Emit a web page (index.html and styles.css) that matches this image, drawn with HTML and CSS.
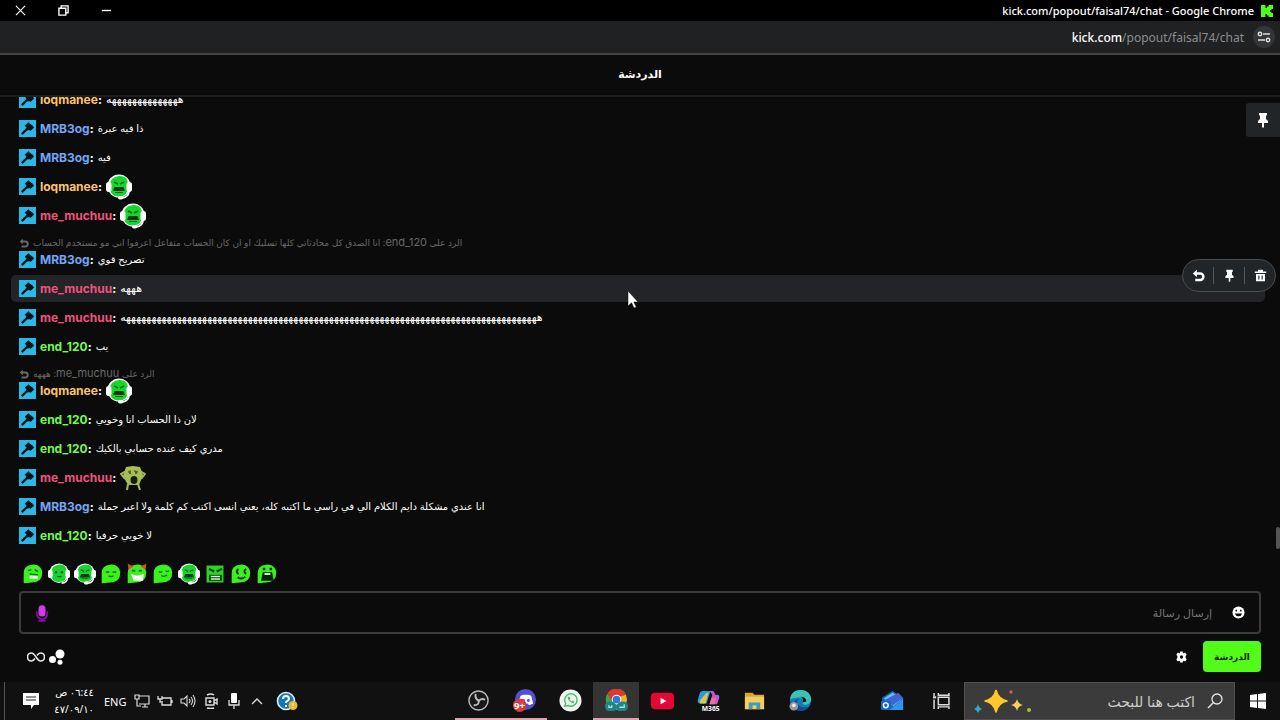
FILE: index.html
```
<!DOCTYPE html>
<html lang="ar" dir="ltr">
<head>
  <meta charset="UTF-8">
  <title>kick.com/popout/faisal74/chat</title>
  <meta name="viewport" content="width=device-width, initial-scale=1.0">
  <link rel="stylesheet" href="styles.css">
</head>
<body>
  <svg class="sprite" aria-hidden="true">
    <symbol id="mod" viewBox="0 0 18 18"><rect width="18" height="18" fill="#2bb8e6"/><path d="M3 15l6.500-6.500" stroke="#071318" stroke-width="2.400"/><path d="M6 6l4-3.500 1.500 1.500 2.500 1.500 2 2.500-3.500 3.500-2-1-1 1-2-2 .500-1.500z" fill="#071318"/></symbol>
    <symbol id="reply" viewBox="0 0 16 16"><path d="M6 1v3h4a5 5 0 010 11H4v-3h6a2 2 0 000-5H6v3L1 5.500z" fill="currentColor"/></symbol>
    <symbol id="pin" viewBox="0 0 16 16"><path d="M4 1h8v2l-1 1v3l2 2v2H9v4l-1 1-1-1v-4H3V9l2-2V4L4 3z" fill="currentColor"/></symbol>
    <symbol id="trash" viewBox="0 0 16 16"><path d="M5 1h6v2h4v2H1V3h4zM2.500 6h11v9h-11z" fill="currentColor"/><path d="M6 8v5M10 8v5" stroke="#222528" stroke-width="1.400"/></symbol>
    <symbol id="headset" viewBox="0 0 26 26"><circle cx="13" cy="12" r="11.500" fill="#fff"/><path d="M4 12Q3.500 3 13 2T22 12Q22.500 22 13 22.500T4 12" fill="#16d52c"/><rect y="8" width="5.500" height="10" rx="2.700" fill="#fff"/><rect x="20.500" y="8" width="5.500" height="10" rx="2.700" fill="#fff"/><path d="M23 17q0 6-7 7" fill="none" stroke="#fff" stroke-width="1.800"/><rect x="12" y="22" width="5" height="3.500" rx="1.700" fill="#fff"/><path d="M8 8l4 2M18 8l-4 2" stroke="#07661a" stroke-width="1.600"/><path d="M7 17l1.500-4h9l1.500 4z" fill="#063b16"/><path d="M9 18.500h8" stroke="#07661a"/></symbol>
    <symbol id="calm" viewBox="0 0 26 26"><circle cx="13" cy="12" r="11.500" fill="#fff"/><path d="M4 12Q3.500 3 13 2T22 12Q22.500 22 13 22.500T4 12" fill="#16d52c"/><rect y="8" width="5.500" height="10" rx="2.700" fill="#fff"/><rect x="20.500" y="8" width="5.500" height="10" rx="2.700" fill="#fff"/><path d="M23 17q0 6-7 7" fill="none" stroke="#fff" stroke-width="1.800"/><circle cx="9.500" cy="11" r="1.400" fill="#075a17"/><circle cx="16.500" cy="11" r="1.400" fill="#075a17"/><path d="M11 16h5" stroke="#075a17" stroke-width="1.500"/></symbol>
    <symbol id="blob" viewBox="0 0 26 26"><path d="M2 24V12Q2 3 12 2t12 9q0 12-12 12z" fill="#3cf01e"/></symbol>
    <symbol id="scream" viewBox="0 0 26 26"><path d="M8 19l-1 6M18 19l2 6M5 14L1 9l5-3M21 14l4-5-5-3" fill="none" stroke="#a6b75c" stroke-width="2"/><path d="M6 2l7-1 7 1 3 8-4 10H8L3 11z" fill="#a9bd56"/><path d="M8 7l3-1M14 6l4 1" stroke="#596628" stroke-width="1.500"/><circle cx="10" cy="8" r="1" fill="#40491f"/><circle cx="16" cy="8" r="1" fill="#40491f"/><ellipse cx="14" cy="15" rx="3.500" ry="4" fill="#171d0c"/></symbol>
  </svg>

  <div class="window">
    <header class="titlebar">
      <div class="controls">
        <button aria-label="Close"><svg viewBox="0 0 12 12"><path d="M1 1l10 10M11 1L1 11" fill="none" stroke="#fff" stroke-width="1.200"/></svg></button>
        <button aria-label="Restore"><svg viewBox="0 0 12 12"><path d="M1 3.500h7.500V11H1zM3.500 3V1H11v7.500H9" fill="none" stroke="#fff" stroke-width="1.500"/></svg></button>
        <button aria-label="Minimize"><svg viewBox="0 0 12 12"><path d="M1 6h10" stroke="#fff" stroke-width="1.500"/></svg></button>
      </div>
      <span class="title">kick.com/popout/faisal74/chat - Google Chrome</span>
      <svg class="kick" viewBox="0 0 12 12"><path d="M0 0h4.500v3H6V1.500h1.500V0H12v4h-1.500v1.200H9v1.600h1.500V8H12v4H7.500v-1.500H6V9H4.500v3H0z" fill="#4dff13"/></svg>
    </header>
    <div class="urlbar">
      <span class="url"><b>kick.com</b>/popout/faisal74/chat</span>
      <button class="site-info" aria-label="Site information"><svg viewBox="0 0 14 14"><path d="M6 4h7M1 10h7" stroke="#ddd" stroke-width="1.500"/><circle cx="3" cy="4" r="1.700" fill="none" stroke="#ddd" stroke-width="1.400"/><circle cx="11" cy="10" r="1.700" fill="none" stroke="#ddd" stroke-width="1.400"/></svg></button>
    </div>
    <h1 class="chat-title">الدردشة</h1>

    <main class="chat">
      <div class="messages">
        <div class="message"><div class="line"><svg class="badge"><use href="#mod"/></svg><b class="orange">loqmanee</b><b>:</b><span class="text laugh">ههههههههههههههه</span></div></div>
        <div class="message"><div class="line"><svg class="badge"><use href="#mod"/></svg><b class="blue">MRB3og</b><b>:</b><span class="text">ذا فيه عبرة</span></div></div>
        <div class="message"><div class="line"><svg class="badge"><use href="#mod"/></svg><b class="blue">MRB3og</b><b>:</b><span class="text">فيه</span></div></div>
        <div class="message"><div class="line"><svg class="badge"><use href="#mod"/></svg><b class="orange">loqmanee</b><b>:</b><svg class="emote"><use href="#headset"/></svg></div></div>
        <div class="message"><div class="line"><svg class="badge"><use href="#mod"/></svg><b class="pink">me_muchuu</b><b>:</b><svg class="emote"><use href="#headset"/></svg></div></div>
        <div class="message">
          <div class="reply"><svg><use href="#reply"/></svg><span dir="rtl">الرد على <i>end_120</i>: انا الصدق كل محادثاتي كلها تسليك او ان كان الحساب متفاعل اعرفوا اني مو مستخدم الحساب</span></div>
          <div class="line"><svg class="badge"><use href="#mod"/></svg><b class="blue">MRB3og</b><b>:</b><span class="text">تصريح قوي</span></div>
        </div>
        <div class="message active">
          <div class="line"><svg class="badge"><use href="#mod"/></svg><b class="pink">me_muchuu</b><b>:</b><span class="text laugh">هههه</span></div>
          <div class="actions">
            <button aria-label="رد"><svg><use href="#reply"/></svg></button>
            <button aria-label="تثبيت"><svg><use href="#pin"/></svg></button>
            <button aria-label="حذف"><svg><use href="#trash"/></svg></button>
          </div>
        </div>
        <div class="message"><div class="line"><svg class="badge"><use href="#mod"/></svg><b class="pink">me_muchuu</b><b>:</b><span class="text laugh">ههههههههههههههههههههههههههههههههههههههههههههههههههههههههههههههههههههههههههههههههههه</span></div></div>
        <div class="message"><div class="line"><svg class="badge"><use href="#mod"/></svg><b class="green">end_120</b><b>:</b><span class="text">يب</span></div></div>
        <div class="message">
          <div class="reply"><svg><use href="#reply"/></svg><span dir="rtl">الرد على <i>me_muchuu</i>: هههه</span></div>
          <div class="line"><svg class="badge"><use href="#mod"/></svg><b class="orange">loqmanee</b><b>:</b><svg class="emote"><use href="#headset"/></svg></div>
        </div>
        <div class="message"><div class="line"><svg class="badge"><use href="#mod"/></svg><b class="green">end_120</b><b>:</b><span class="text">لان ذا الحساب انا وخويي</span></div></div>
        <div class="message"><div class="line"><svg class="badge"><use href="#mod"/></svg><b class="green">end_120</b><b>:</b><span class="text">مدري كيف عنده حسابي بالكيك</span></div></div>
        <div class="message"><div class="line"><svg class="badge"><use href="#mod"/></svg><b class="pink">me_muchuu</b><b>:</b><svg class="emote"><use href="#scream"/></svg></div></div>
        <div class="message"><div class="line"><svg class="badge"><use href="#mod"/></svg><b class="blue">MRB3og</b><b>:</b><span class="text">انا عندي مشكلة دايم الكلام الي في راسي ما اكتبه كله، يعني انسى اكتب كم كلمة ولا اعبر جملة</span></div></div>
        <div class="message"><div class="line"><svg class="badge"><use href="#mod"/></svg><b class="green">end_120</b><b>:</b><span class="text">لا خويي حرفيا</span></div></div>
      </div>
      <button class="pinned" aria-label="الرسالة المثبتة"><svg><use href="#pin"/></svg></button>
      <div class="scroll-thumb"></div>
      <svg class="cursor" viewBox="0 0 12 19"><path d="M1 1v15l3.500-3.300L7 18l2.300-1-2.500-5H11z" fill="#fff" stroke="#111" stroke-width=".5"/></svg>
    </main>

    <section class="composer">
      <div class="emotes">
        <button aria-label="Emote 1"><svg viewBox="0 0 26 26"><use href="#blob"/><path d="M7 9l4-1M15 8l4 2" stroke="#08741a" stroke-width="1.800"/><path d="M9 15h10v4H9z" fill="#d9f7c9"/><path d="M9 13l10 1" stroke="#08741a" stroke-width="1.500"/></svg></button>
        <button aria-label="Emote 2"><svg><use href="#calm"/></svg></button>
        <button aria-label="Emote 3"><svg><use href="#headset"/></svg></button>
        <button aria-label="Emote 4"><svg viewBox="0 0 26 26"><use href="#blob"/><path d="M7 10q2 2 4 0M15 10q2 2 4 0M10 15q3 2 6 0" fill="none" stroke="#08741a" stroke-width="1.600"/></svg></button>
        <button aria-label="Emote 5"><svg viewBox="0 0 26 26"><use href="#blob"/><path d="M2 1l7 3-6 4zM24 1l-7 3 6 4z" fill="#e84b1e"/><path d="M7 9h4M15 9h4" stroke="#08741a" stroke-width="2"/><path d="M6 13l7 2 8-2-1 8H9z" fill="#fff"/></svg></button>
        <button aria-label="Emote 6"><svg viewBox="0 0 26 26"><use href="#blob"/><path d="M8 10q2 2 4 0M16 9q2 2 4 0M11 15q4 2 7-1" fill="none" stroke="#08741a" stroke-width="1.600"/></svg></button>
        <button aria-label="Emote 7"><svg><use href="#headset"/></svg></button>
        <button aria-label="Emote 8"><svg viewBox="0 0 26 26"><path d="M3 3h20v20H3z" fill="#28d81f"/><path d="M6 7l6 3M21 7l-6 3" stroke="#06320f" stroke-width="2.500"/><path d="M6 14h15v7H6z" fill="#06320f"/><path d="M8 16h11M8 19h11" stroke="#d8f8cd" stroke-width="1.800"/></svg></button>
        <button aria-label="Emote 9"><svg viewBox="0 0 26 26"><use href="#blob"/><path d="M10 7q-4 3 0 6M19 7q-4 3 0 6M9 17q5 3 9-1" fill="none" stroke="#06320f" stroke-width="2.200"/></svg></button>
        <button aria-label="Emote 10"><svg viewBox="0 0 26 26"><use href="#blob"/><path d="M8 7h3M16 7h3" stroke="#06320f" stroke-width="3"/><path d="M6 21l2-10h11l2 10z" fill="#06230b"/><path d="M10 13h7" stroke="#fff" stroke-width="2"/></svg></button>
      </div>
      <div class="field">
        <button aria-label="تسجيل صوتي"><svg class="mic" viewBox="0 0 16 20"><path d="M2 8v3a6 6 0 0012 0V8M8 17v2M4 19h8" fill="none" stroke="#8b0cae" stroke-width="2"/><rect x="4" y="1" width="8" height="13" rx="4" fill="#d33be8"/></svg></button>
        <input type="text" dir="rtl" placeholder="إرسال رسالة" aria-label="إرسال رسالة">
        <button aria-label="رموز تعبيرية"><svg class="smile" viewBox="0 0 14 14"><circle cx="7" cy="7" r="6.500" fill="#fff"/><path d="M4.500 4v2M9.500 4v2" stroke="#0b0b0b" stroke-width="1.600"/><path d="M3 8h8q-1 3-4 3T3 8" fill="#0b0b0b"/></svg></button>
      </div>
      <div class="footer">
        <button aria-label="∞"><svg class="infinity" viewBox="0 0 18 10"><path d="M8 6.500C7 8 6 9 4.500 9a4 4 0 010-8C6 1 7 2 9 5s3 4 4.500 4a4 4 0 000-8C12 1 11 2 10 3.500" fill="none" stroke="#e8e8e8" stroke-width="1.600"/></svg></button>
        <button aria-label="نقاط"><svg class="dots" viewBox="0 0 16 16"><circle cx="11" cy="5" r="4.500" fill="#fff"/><circle cx="3.500" cy="10.500" r="3.500" fill="#fff"/><circle cx="11" cy="13.300" r="2.500" fill="#fff"/></svg></button>
        <button class="settings" aria-label="الإعدادات"><svg viewBox="0 0 12 12"><path d="M4.500 0h3v1.500l1 .500L10 1l1.700 2.500L10.500 5v2l1.200 1.500L10 11l-1.500-1-1 .500V12h-3v-1.500l-1-.500L2 11 .300 8.500 1.500 7V5L.300 3.500 2 1l1.500 1 1-.500z" fill="#fff"/><circle cx="6" cy="6" r="1.800" fill="#0b0b0b"/></svg></button>
        <button class="send">الدردشة</button>
      </div>
    </section>
  </div>

  <footer class="taskbar">
    <div class="tray">
      <svg class="note" viewBox="0 0 16 16"><path d="M0 0h16v12h-5l-3 4v-4H0z" fill="#fff"/><path d="M3 4h10M3 7h10" stroke="#222"/></svg>
      <time class="clock" dir="rtl">٠٦:٤٤ ص<br>٤٧/٠٩/١٠</time>
      <span class="lang">ENG</span>
      <svg viewBox="0 0 16 16"><path d="M5 3h10v8H5M8 14h6M11 11v3M1 2h4v4H1zM3 6v7h4" fill="none" stroke="#ddd" stroke-width="1.200"/></svg>
      <svg viewBox="0 0 16 16"><path d="M5 5h9v7H5v-2M15 7v3M1 3v3h4V3M3 6v3h3" fill="none" stroke="#ddd" stroke-width="1.300"/></svg>
      <svg viewBox="0 0 16 16"><path d="M1 6h3l3-3v10l-3-3H1zM9 6q2 2 0 4M11 4q3 4 0 8M13 2q4 6 0 12" fill="none" stroke="#ddd" stroke-width="1.100"/></svg>
      <svg viewBox="0 0 16 16"><path d="M3 5h8v7H3zM11 8l3-2v5l-3-2M4 2q4-2 7 0M4 15q4 1 7 0" fill="none" stroke="#ddd" stroke-width="1.400"/><circle cx="7" cy="8.500" r="1.500" fill="#ddd"/></svg>
      <svg viewBox="0 0 16 16"><rect x="5" width="6" height="10" rx="1" fill="#fff"/><path d="M3 7v5h10V7M8 12v4" fill="none" stroke="#ddd" stroke-width="1.300"/></svg>
      <svg viewBox="0 0 16 16"><path d="M3 11l5-5 5 5" fill="none" stroke="#ddd" stroke-width="1.300"/></svg>
      <svg class="help" viewBox="0 0 22 20"><circle cx="10" cy="10" r="8.500" fill="#1677b7" stroke="#d9edf5" stroke-width="1.600"/><path d="M7 8q0-3 3-3t3 3q0 1-3 3v1M10 14v2" fill="none" stroke="#fff" stroke-width="2"/><circle cx="17" cy="14.500" r="4.500" fill="#eeb82c"/><path d="M17 12v3M17 16v1" stroke="#fff"/></svg>
    </div>
    <nav class="apps" aria-label="Apps">
      <button class="open" aria-label="OBS"><svg viewBox="0 0 24 24"><circle cx="12" cy="12" r="10" fill="#17191b" stroke="#bbb" stroke-width="1.500"/><path d="M9 5q-1 6 4 7M19 11q-6-2-7 3M7 17q6 0 5-5" fill="none" stroke="#bbb" stroke-width="2"/></svg></button>
      <button class="open" aria-label="Discord"><svg viewBox="0 0 24 24"><circle cx="13" cy="11" r="11" fill="#5350cf"/><path d="M8 7l3-1h5l3 1 2 8-4 2-2-2h-4l-2 2-4-2z" fill="#fff"/><circle cx="11" cy="12" r="1.500" fill="#5350cf"/><circle cx="16" cy="12" r="1.500" fill="#5350cf"/><circle cx="7" cy="17" r="7" fill="#d83c42"/><text x="1" y="21" font-size="10" font-weight="700" fill="#fff">9+</text></svg></button>
      <button aria-label="WhatsApp"><svg viewBox="0 0 24 24"><circle cx="12" cy="12" r="11.500" fill="#ecf6ed"/><path d="M6 18l1-3a6.500 6.500 0 112.500 2.200z" fill="none" stroke="#4eb775" stroke-width="1.500"/><path d="M9 8q0 5 6 7l1-2-2-1-1 1-2-2 1-1-1-2z" fill="#4eb775"/></svg></button>
      <button class="open current" aria-label="Chrome"><svg viewBox="0 0 24 24"><circle cx="12" cy="11" r="11" fill="#e5b72b"/><path d="M2 6a11 11 0 0120 0l-10 3-4 5z" fill="#d83b2e"/><path d="M2 6l7 8 2 8A11 11 0 012 6" fill="#36a852"/><circle cx="12" cy="11" r="5" fill="#fff"/><circle cx="12" cy="11" r="4" fill="#3178dc"/><path d="M0 18q0-5 6-5 4 0 6 4 2-4 6-4 6 0 6 5t-5 5h-5l-2-2-2 2H5q-5 0-5-5" fill="#20858b"/><path d="M4 17v2h3v-2M15 19h5v-3" fill="none" stroke="#a7e2dd" stroke-width="1.400"/></svg></button>
      <button aria-label="YouTube"><svg viewBox="0 0 24 24"><rect y="4" width="24" height="17" rx="4" fill="#e40736"/><path d="M10 9l6 3.500-6 3.500z" fill="#fff"/></svg></button>
      <button aria-label="Microsoft 365"><svg viewBox="0 0 24 24"><path d="M6 2h8l-4 13H3q-3 0-2-4l2-7q1-2 3-2" fill="#2799e5"/><path d="M3 12l7-8h2l-3 11H3z" fill="#dec447"/><path d="M13 2h3q2 0 3 4h2q3 0 2 4l-2 6h-8l3-10z" fill="#bd59d6"/><path d="M15 10l5-1-2 7h-5z" fill="#ee7194"/><text x="5" y="23" font-size="7" font-weight="700" fill="#fff">M365</text></svg></button>
      <button aria-label="File Explorer"><svg viewBox="0 0 24 24"><path d="M2 4h8l2 2h10v15H2z" fill="#dca52c"/><path d="M2 8h20v13H2z" fill="#f5ce62"/><path d="M6 21v-7h12v7h-4v-4h-4v4z" fill="#3d9bbc"/></svg></button>
      <button aria-label="Edge"><svg viewBox="0 0 24 24"><circle cx="12" cy="12" r="11" fill="#167abd"/><path d="M1 11C2 3 7 1 12 1c7 0 12 5 11 11-1 5-9 6-9 2 2-4-2-6-6-5q-4 0-7 2" fill="#38c4b4"/><path d="M10 10q-5 6 4 9h6q-2 4-8 4Q4 22 5 15q1-4 5-5" fill="#164b94"/><path d="M14 14q2-4-2-6 6 0 6 5" fill="#101214"/><circle cx="5" cy="18" r="4.500" fill="#999"/><circle cx="5" cy="17" r="2" fill="#e7e7e7"/></svg></button>
    </nav>
    <div class="shortcuts">
      <button aria-label="Outlook"><svg viewBox="0 0 24 24"><path d="M1 9l11-7 11 7v13H3z" fill="#1769ce"/><path d="M3 10l9-6 10 6-9 8z" fill="#62c6f5"/><path d="M3 12l15-8 5 5-12 9z" fill="#4262d6"/><path d="M9 22l14-12v12z" fill="#2c97ec"/><rect y="12" width="10" height="10" rx="2" fill="#1169c2"/><circle cx="5" cy="17" r="2.500" fill="none" stroke="#fff" stroke-width="1.500"/></svg></button>
      <button aria-label="Task view"><svg class="taskview" viewBox="0 0 16 16"><path d="M5 5h10v7H5zM5 1v2h10V1M5 16v-2h10v2M1 1v3M1 7v9" fill="none" stroke="#ddd" stroke-width="1.400"/><path d="M0 5h3" stroke="#ddd" stroke-width="2"/></svg></button>
    </div>
    <label class="search">
      <svg class="sparkles" viewBox="0 0 60 26"><path d="M23 2q2 9 11 11-9 2-11 11-2-9-11-11 9-2 11-11" fill="#ffc72c" stroke="#ffc72c" stroke-width="1.500" stroke-linejoin="round"/><path d="M44 11q1 5 6 6-5 1-6 6-1-5-6-6 5-1 6-6" fill="#f5d256"/><path d="M5 16q1 4 4 5-3 1-4 4-1-3-4-4 3-1 4-5" fill="#35a7cc"/><circle cx="38" cy="4" r="1.700" fill="#d65560"/><circle cx="56" cy="22" r="2" fill="#a9bd43"/></svg>
      <input type="text" dir="rtl" placeholder="اكتب هنا للبحث" aria-label="اكتب هنا للبحث">
      <svg class="lens" viewBox="0 0 16 16"><circle cx="10" cy="6" r="5" fill="none" stroke="#e6e6e6" stroke-width="1.300"/><path d="M6.500 9.500L1 15" stroke="#e6e6e6" stroke-width="1.400"/></svg>
    </label>
    <button class="start" aria-label="Start"><svg viewBox="0 0 16 16"><path d="M0 2l7-1v6.500H0zM8 1l8-1v7.500H8zM0 8.500h7V15l-7-1zM8 8.500h8V16l-8-1z" fill="#fff"/></svg></button>
  </footer>
</body>
</html>
```
FILE: styles.css
```
* { box-sizing: border-box; }
body { margin: 0; height: 100vh; display: flex; flex-direction: column; background: #0b0b0b; color: #fff; font-family: Inter, "DejaVu Sans", sans-serif; overflow: hidden; }
button { display: flex; align-items: center; justify-content: center; padding: 0; border: 0; background: none; color: inherit; font: inherit; cursor: pointer; }
input { min-width: 0; padding: 0; border: 0; outline: 0; background: none; color: #fff; font: inherit; }
.sprite { display: none; }
.window { flex: 1; min-height: 0; display: flex; flex-direction: column; }

.titlebar { display: flex; align-items: center; height: 21px; padding: 0 7px 0 15px; background: #000; }
.controls { display: flex; gap: 32px; margin-right: auto; }
.controls svg { width: 11px; height: 11px; }
.title { font: 500 11px "Noto Sans", sans-serif; }
.kick { width: 12px; height: 12px; margin-left: 7px; }
.urlbar { display: flex; align-items: center; justify-content: flex-end; gap: 9px; height: 34px; padding-right: 5px; border-bottom: 2px solid #444; background: #202123; }
.url { color: #8b8c8e; font: 12px "Noto Sans", sans-serif; }
.url b { color: #fff; font-weight: 500; }
.site-info { width: 22px; height: 22px; border-radius: 50%; background: #343537; }
.site-info svg { width: 14px; height: 14px; }
.chat-title { margin: 0; height: 42px; border-bottom: 2px solid #1d1e1f; text-align: center; font-size: 11px; font-weight: 700; line-height: 38px; }

.chat { position: relative; flex: 1; min-height: 0; display: flex; flex-direction: column; justify-content: flex-end; overflow: hidden; }
.messages { display: flex; flex-direction: column; gap: 2px; padding: 0 15px 1px 11px; }
.message { padding: 4px 8px; border-radius: 5px; }
.active { position: relative; background: #222427; }
.line { display: flex; align-items: center; height: 19px; font-size: 12px; line-height: 19px; }
.badge { width: 17px; height: 17px; margin-right: 4px; }
.text { margin-left: 4px; font-size: 10px; }
.laugh { font-size: 11px; }
.emote { width: 26px; height: 26px; margin: -4px 0 -4px 4px; }
.reply { display: flex; align-items: center; gap: 4px; height: 15px; color: #686868; font-size: 9px; line-height: 13px; }
.reply i { font-size: 11px; font-style: normal; }
.reply svg { width: 10px; height: 10px; }
.orange { color: #ffc466; }
.blue { color: #72a5f5; }
.pink { color: #f0527d; }
.green { color: #71fb4c; }

.actions { position: absolute; right: -11px; top: -16px; display: flex; align-items: center; width: 94px; height: 33px; border: 1px solid #4a4d50; border-radius: 17px; background: #222528; }
.actions button { flex: 1; height: 17px; }
.actions button + button { border-left: 1px solid #55585b; }
.actions svg { width: 13px; height: 13px; }
.pinned { position: absolute; top: 6px; right: 0; width: 34px; height: 34px; border-radius: 3px 0 0 3px; background: #222528; }
.pinned svg { width: 16px; height: 16px; }
.scroll-thumb { position: absolute; right: 0; bottom: 1px; width: 4px; height: 22px; border-radius: 2px; background: #555; }
.cursor { position: absolute; left: 49%; top: 193px; width: 12px; height: 19px; }

.composer { padding: 12px 19px 10px; }
.emotes { display: flex; gap: 4px; height: 23px; padding-left: 3px; }
.emotes svg { width: 22px; height: 22px; }
.field { display: flex; align-items: center; height: 43px; margin-top: 6px; padding: 0 14px; border: 2px solid #3b3b3b; border-radius: 4px; }
.field input { flex: 1; margin: 0 20px; font-size: 11px; }
.field input::placeholder { color: #777; opacity: 1; }
.mic { width: 14px; height: 20px; }
.smile { width: 13px; height: 13px; }
.footer { display: flex; align-items: center; gap: 4px; height: 31px; margin-top: 7px; padding-left: 8px; }
.infinity { width: 18px; height: 10px; }
.dots { width: 16px; height: 16px; }
.settings { margin-left: auto; margin-right: 12px; }
.settings svg { width: 11px; height: 12px; }
.send { width: 58px; height: 31px; border-radius: 4px; background: #53fc18; color: #102008; font-size: 9px; font-weight: 700; }

.taskbar { display: flex; height: 38px; background: #111; font-family: "Noto Sans", "DejaVu Sans", sans-serif; }
.tray { display: flex; align-items: center; gap: 7px; margin-right: auto; margin-left: 4px; padding-left: 18px; border-left: 1px solid #555; }
.tray svg { width: 16px; height: 16px; }
.tray .help { width: 22px; height: 20px; margin-left: 4px; }
.clock { width: 48px; text-align: right; direction: ltr; font-size: 10px; line-height: 17px; }
.lang { margin: 0 1px 0 3px; font-size: 11px; }
.apps { display: flex; margin-right: 46px; }
.apps button, .shortcuts button { width: 46px; height: 38px; border-bottom: 2px solid transparent; }
.apps svg, .shortcuts svg { width: 23px; height: 23px; }
.apps .open { border-color: #dda2ac; }
.apps .current { background: #343434; }
.shortcuts { display: flex; gap: 3px; }
.shortcuts .taskview { width: 17px; height: 17px; }
.search { display: flex; align-items: center; width: 271px; padding: 0 11px 0 8px; border: 1px solid #505050; background: #3b3b3b; }
.sparkles { width: 60px; height: 26px; }
.search input { flex: 1; margin-right: 12px; font-size: 14px; }
.search input::placeholder { color: #ccc; opacity: 1; }
.lens { width: 16px; height: 16px; }
.start { width: 45px; }
.start svg { width: 16px; height: 16px; }
```
